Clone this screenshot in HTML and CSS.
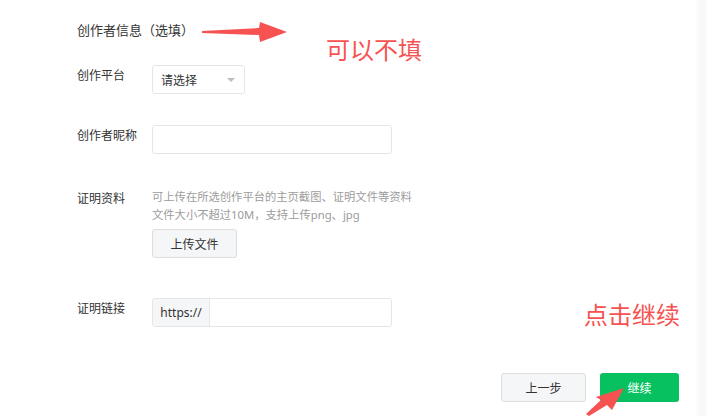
FILE: index.html
```html
<!DOCTYPE html>
<html lang="zh-CN">
<head>
<meta charset="utf-8">
<title>创作者信息</title>
<link rel="stylesheet" href="styles.css">
</head>
<body>
<div class="page">
  <div class="main">
    <div class="title">创作者信息（选填）</div>

    <div class="row row-platform">
      <div class="label">创作平台</div>
      <div class="select"><span>请选择</span><span class="caret"></span></div>
    </div>

    <div class="row row-nick">
      <div class="label">创作者昵称</div>
      <div class="input"></div>
    </div>

    <div class="row row-proof">
      <div class="label">证明资料</div>
      <div class="proof">
        <div class="hint">可上传在所选创作平台的主页截图、证明文件等资料<br>文件大小不超过10M，支持上传png、jpg</div>
        <div class="btn btn-upload">上传文件</div>
      </div>
    </div>

    <div class="row row-link">
      <div class="label">证明链接</div>
      <div class="input input-group"><span class="prefix">https://</span></div>
    </div>

    <div class="footer">
      <div class="btn btn-prev">上一步</div>
      <div class="btn btn-primary">继续</div>
    </div>
  </div>
  <div class="edge"></div>

  <svg class="annot" width="707" height="416" viewBox="0 0 707 416">
    <polygon class="arrow" points="202,31 259,28 260,22 287,32 260,42 259,35 202,33"/>
    <polygon class="arrow" points="586,414 601,400 596,397 624,388 612,410 607,405 589,416"/>
  </svg>
  <div class="note note-1">可以不填</div>
  <div class="note note-2">点击继续</div>
</div>
</body>
</html>
```

FILE: styles.css
```css
* { box-sizing: border-box; }

html, body {
  margin: 0;
  padding: 0;
  background: #fff;
}

body {
  font-family: "Noto Sans", "Noto Sans CJK SC", sans-serif;
  color: #333;
  font-size: 12px;
}

.page {
  position: relative;
  width: 707px;
  height: 416px;
  display: flex;
  overflow: hidden;
}

.main {
  flex: 1;
  padding: 20px 16px 0 77px;
  display: flex;
  flex-direction: column;
}

.edge {
  width: 12px;
  background: linear-gradient(to right, #ffffff, #f8f8f8 40%, #f9f9f9);
}

.title {
  font-size: 13px;
  line-height: 20px;
  color: #333;
}

.row {
  display: flex;
  align-items: flex-start;
}

.row-platform { margin-top: 25px; }
.row-nick { margin-top: 31px; }
.row-proof { margin-top: 34px; }
.row-link { margin-top: 40px; }

.label {
  width: 75px;
  flex: none;
  line-height: 20px;
  padding-top: 1px;
  font-size: 12px;
  color: #333;
}

.select {
  width: 93px;
  height: 29px;
  border: 1px solid #e6e6e6;
  border-radius: 3px;
  display: flex;
  align-items: center;
  justify-content: space-between;
  padding: 0 9px 0 8px;
  font-size: 12px;
  color: #333;
}

.caret {
  width: 0;
  height: 0;
  border-left: 4px solid transparent;
  border-right: 4px solid transparent;
  border-top: 4px solid #bdbdbd;
  margin-top: 1px;
}

.input {
  width: 240px;
  height: 29px;
  border: 1px solid #e6e6e6;
  border-radius: 3px;
}

.input-group {
  display: flex;
  overflow: hidden;
}

.prefix {
  width: 57px;
  background: #f5f6f7;
  border-right: 1px solid #e6e6e6;
  display: flex;
  align-items: center;
  justify-content: center;
  font-size: 12px;
  color: #333;
}

.proof {
  display: flex;
  flex-direction: column;
  align-items: flex-start;
}

.hint {
  font-family: "Noto Sans", "Noto Sans CJK SC", sans-serif;
  color: #9c9c9c;
  font-size: 11.3px;
  line-height: 18px;
}

.btn {
  height: 29px;
  display: flex;
  align-items: center;
  justify-content: center;
  font-size: 12px;
  border-radius: 3px;
}

.btn-upload {
  margin-top: 5px;
  width: 85px;
  background: #f5f6f7;
  border: 1px solid #dedede;
  color: #333;
}

.footer {
  margin-top: 46px;
  display: flex;
  justify-content: flex-end;
  gap: 14px;
}

.btn-prev {
  width: 85px;
  background: #f5f6f7;
  border: 1px solid #dedede;
  color: #333;
}

.btn-primary {
  width: 79px;
  background: #07c160;
  color: #fff;
}

.annot {
  position: absolute;
  left: 0;
  top: 0;
  pointer-events: none;
}

.arrow {
  fill: #f75252;
}

.note {
  position: absolute;
  font-family: "Noto Sans CJK SC", sans-serif;
  font-size: 24px;
  line-height: 24px;
  color: #f75252;
}

.note-1 { left: 326px; top: 37px; }
.note-2 { left: 584px; top: 302px; }
```
